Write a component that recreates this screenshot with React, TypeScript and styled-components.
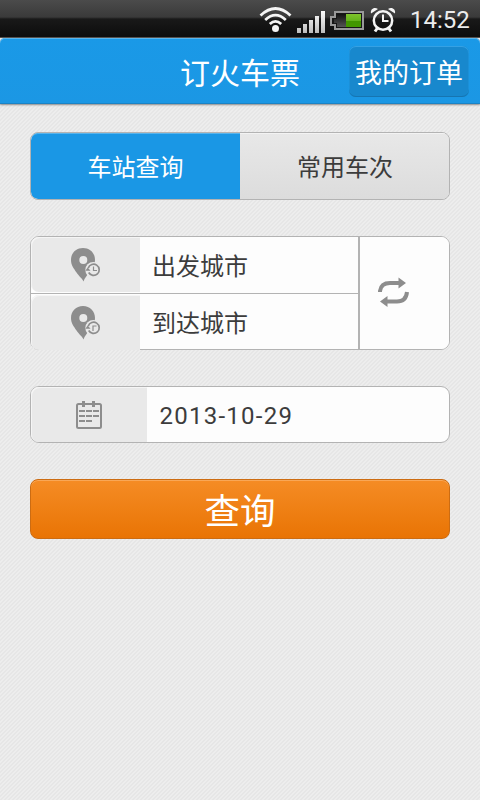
import React from 'react';
import styled, { createGlobalStyle, css } from 'styled-components';

const GlobalStyle = createGlobalStyle`
  * { box-sizing: border-box; }
  body {
    margin: 0;
    background: #e9e9e9;
    font-family: Roboto, "Noto Sans CJK SC", sans-serif;
    color: #3c3c3c;
  }
  button { font-family: inherit; margin: 0; padding: 0; border: 0; color: inherit; }
`;

const Screen = styled.div`
  width: 480px;
  height: 800px;
  overflow: hidden;
  background: repeating-linear-gradient(135deg, #e6e6e6 0 1.414px, #ededed 1.414px 2.828px);
`;

const StatusBar = styled.div`
  height: 38px;
  display: flex;
  align-items: flex-start;
  background: linear-gradient(#4b4b4b 0, #3a3a3a 17px, #191919 19px, #0d0d0d 36px, #0d0d0d 37px, #55504c 37px);
  padding-left: 259px;
`;

const Clock = styled.span`
  padding-left: 11px;
  font-size: 24px;
  line-height: 40px;
  color: #ececec;
`;

const Header = styled.header`
  height: 66px;
  display: grid;
  grid-template-columns: 1fr 120px 1fr;
  align-items: center;
  border-radius: 5px 5px 0 0;
  background: linear-gradient(#1a99e7, #1b97e4);
  box-shadow: inset 0 1px #58b6ee, inset 0 -1px #1b83c5, 0 1px 2px #8b8b8b;
`;

const Title = styled.h1`
  grid-column: 2;
  margin: 0;
  font-size: 30px;
  line-height: 40px;
  padding-top: 6px;
  font-weight: 400;
  color: #fff;
  white-space: nowrap;
`;

const OrdersButton = styled.button`
  justify-self: end;
  width: 120px;
  height: 51px;
  margin: 1px 11px 0 0;
  padding-top: 5px;
  border-radius: 7px;
  background: #1888cd;
  box-shadow: inset 0 1px #35a1e4, inset 0 -1px #1675b1, inset 1px 0 #1b90d8, inset -1px 0 #1b90d8;
  font-size: 27px;
  line-height: 46px;
  color: #fff;
  white-space: nowrap;
`;

const Content = styled.main`
  padding: 28px 30px 0;
`;

const Tabs = styled.div`
  height: 68px;
  display: grid;
  grid-template-columns: 209px 1fr;
  border: 1px solid #b3b3b3;
  border-radius: 8px;
  overflow: hidden;
`;

const Tab = styled.button<{ $active?: boolean }>`
  padding-top: 4px;
  font-size: 24px;
  line-height: 62px;
  ${({ $active }) =>
    $active
      ? css`
          color: #fff;
          background: #1a97e5;
          box-shadow: inset 0 1px #58b4ec;
          border-radius: 7px 0 0 7px;
        `
      : css`
          padding-left: 1px;
          background: linear-gradient(#e8e8e8, #dcdcdc);
          box-shadow: inset 0 1px #f3f3f3;
        `}
`;

const Panel = styled.div`
  border: 1px solid #b3b3b3;
  border-radius: 9px;
  background: #fdfdfd;
`;

const RoutePanel = styled(Panel)`
  height: 114px;
  margin-top: 36px;
  display: grid;
  grid-template: 112px / 327px 1fr;
`;

const CityColumn = styled.div`
  display: grid;
  grid-template-rows: 57px 55px;
`;

const IconCell = styled.div`
  display: flex;
  align-items: flex-start;
  background: #e9e9e9;
  box-shadow: inset 1px 1px #f5f5f5;
  border-radius: 8px 0 0 8px;
`;

/* The lower icon cell runs over the panel's bottom border. */
const CityRow = styled.div`
  display: grid;
  grid-template-columns: 109px 1fr;
  &:first-child {
    grid-template-rows: 56px;
    border-bottom: 1px solid #b3b3b3;
  }
  &:last-child { grid-template-rows: 55px; }
  &:first-child ${IconCell} { margin-bottom: 1px; }
  &:last-child ${IconCell} { margin: 1px 0 -1px; }
`;

const City = styled.span`
  padding: 8px 0 0 12px;
  font-size: 24px;
  line-height: 44px;
`;

const SwapButton = styled.button`
  display: flex;
  border-left: 2px solid #b3b3b3;
  border-radius: 0 8px 8px 0;
  background: #fdfdfd;
  padding: 38px 0 0 17px;
`;

const Divider = styled.span`
  background: #b3b3b3;
`;

const DatePanel = styled(Panel)`
  height: 57px;
  margin-top: 36px;
  display: grid;
  grid-template: 55px / 116px 1fr;
`;

const DateText = styled.span`
  padding: 6px 0 0 12.5px;
  font-size: 24px;
  line-height: 46px;
  letter-spacing: 1.25px;
`;

const SearchButton = styled.button`
  display: block;
  width: 420px;
  height: 60px;
  margin-top: 36px;
  padding-top: 7px;
  border: 1px solid #cc6c12;
  border-radius: 8px;
  background: linear-gradient(#f58c25, #e97404);
  box-shadow: inset 0 1px #f9a756;
  color: #fff;
  font-size: 35.5px;
  line-height: 51px;
`;

const Glyph = styled.svg<{ $left?: number; $top?: number }>`
  display: block;
  flex: none;
  margin: ${({ $top = 0 }) => $top}px 0 0 ${({ $left = 0 }) => $left}px;
`;

const StatusIcons = () => (
  <Glyph width="140" height="37" viewBox="0 0 140 37" fill="none">
    <defs>
      <linearGradient id="bars" x1="0" y1="10" x2="0" y2="33" gradientUnits="userSpaceOnUse">
        <stop stopColor="#fff" />
        <stop offset="1" stopColor="#bdbdbd" />
      </linearGradient>
      <linearGradient id="empty" x2="0" y2="1">
        <stop stopColor="#111" />
        <stop offset="1" stopColor="#555" />
      </linearGradient>
      <linearGradient id="charge" x2="0" y2="1">
        <stop stopColor="#80c42c" />
        <stop offset=".5" stopColor="#65b41d" />
        <stop offset=".55" stopColor="#429600" />
        <stop offset="1" stopColor="#439900" />
      </linearGradient>
    </defs>
    <g stroke="#f5f5f5" strokeWidth="2.8">
      <path d="M1.5 15.5Q16.5 1.5 31.5 15.5" />
      <path d="M6.2 20Q16.5 10.3 26.8 20" />
      <path d="M10.8 24Q16.5 18.8 22.2 24" />
    </g>
    <circle cx="16.5" cy="28.5" r="3.5" fill="#f5f5f5" />
    <path fill="url(#bars)" d="M38 28h4v5h-4zM44 24h4v9h-4zM50 20h4v13h-4zM56 16h4v17h-4zM62 11h4v22h-4z" />
    <path fill="#171717" stroke="#999" strokeWidth="2" d="M76 12h28v17H76v-4h-4v-8h4z" />
    <path fill="url(#empty)" d="M78 14h9v13h-9v-4h-3v-4h3z" />
    <path fill="url(#charge)" d="M87 14h15v13H87z" />
    <circle cx="124" cy="20.5" r="9.2" stroke="#f5f5f5" strokeWidth="2.5" />
    <path stroke="#f5f5f5" strokeWidth="2" d="M124 14.5V21h5.5" />
    <path stroke="#f5f5f5" strokeWidth="3" d="m118.5 28-2.5 3.5m13.5-3.5 2.5 3.5" />
    <path fill="#f5f5f5" d="M112 13.5c-1-4 3-7 7-4.5zM136 13.5c1-4-3-7-7-4.5z" />
  </Glyph>
);

const PinIcon = ({ top, short }: { top: number; short?: boolean }) => (
  <Glyph $left={39} $top={top} width="32" height="36" viewBox="0 0 32 36" fill="none">
    <path
      fill="#8d8d8d"
      fillRule="evenodd"
      d="M13 1C6 1 1 6 1 13c0 5 2.5 8 5.5 12.5C9.5 30 12 31 13.5 34.5 14.5 31 17 29 19 25c3-5 6-7 6-12C25 6 20 1 13 1m.3 8a4 4 0 1 1 0 8 4 4 0 0 1 0-8"
    />
    <circle cx="23.3" cy="23" r="8" fill="#e9e9e9" />
    <path d="M18.7 25.5A5.6 5.6 0 1 0 18.3 21" stroke="#8d8d8d" strokeWidth="1.7" />
    <path fill="#8d8d8d" d="m15.3 23.8 2.4-3.3 2.8 3.3z" />
    <path d={short ? 'M23 26v-5h3.5' : 'M23.5 19.5v4H27'} stroke="#8d8d8d" strokeWidth="1.2" />
  </Glyph>
);

const CalendarIcon = () => (
  <Glyph $left={45} $top={14} width="26" height="28" viewBox="0 0 26 28" fill="none">
    <rect x="1" y="3" width="24" height="24" rx="1.5" stroke="#8d8d8d" strokeWidth="2" />
    <path d="M7.5 0v6M17.5 0v6" stroke="#8d8d8d" strokeWidth="3" />
    <path
      d="M3 10h6m1 0h6m1 0h6M3 15h6m1 0h6m1 0h6M3 20h6m1 0h6"
      stroke="#8d8d8d"
      strokeWidth="2"
    />
  </Glyph>
);

const SwapIcon = () => (
  <Glyph width="32" height="32" viewBox="0 0 32 32" fill="none">
    <path d="M3 17v-1q1-8 10-8h9M30 17q-1 9.5-10 9.5H10" stroke="#8d8d8d" strokeWidth="4" />
    <path d="M21.5 2.5 29 8l-7.5 5.5zM10.5 21 3 26.5l7.5 5.5z" fill="#8d8d8d" />
  </Glyph>
);

/* The swap cell keeps a square divider beside its rounded outer corners. */
const SwapCell = styled.div`
  display: grid;
  grid-template-columns: 2px 1fr;
  ${SwapButton} {
    border-left: 0;
  }
`;

export default function App() {
  return (
    <>
      <GlobalStyle />
      <Screen>
        <StatusBar>
          <StatusIcons />
          <Clock>14:52</Clock>
        </StatusBar>
        <Header>
          <Title>订火车票</Title>
          <OrdersButton>我的订单</OrdersButton>
        </Header>
        <Content>
          <Tabs>
            <Tab $active>车站查询</Tab>
            <Tab>常用车次</Tab>
          </Tabs>
          <RoutePanel>
            <CityColumn>
              <CityRow>
                <IconCell><PinIcon top={10} /></IconCell>
                <City>出发城市</City>
              </CityRow>
              <CityRow>
                <IconCell><PinIcon top={10} short /></IconCell>
                <City>到达城市</City>
              </CityRow>
            </CityColumn>
            <SwapCell>
              <Divider />
              <SwapButton aria-label="交换城市"><SwapIcon /></SwapButton>
            </SwapCell>
          </RoutePanel>
          <DatePanel>
            <IconCell><CalendarIcon /></IconCell>
            <DateText>2013-10-29</DateText>
          </DatePanel>
          <SearchButton>查询</SearchButton>
        </Content>
      </Screen>
    </>
  );
}
